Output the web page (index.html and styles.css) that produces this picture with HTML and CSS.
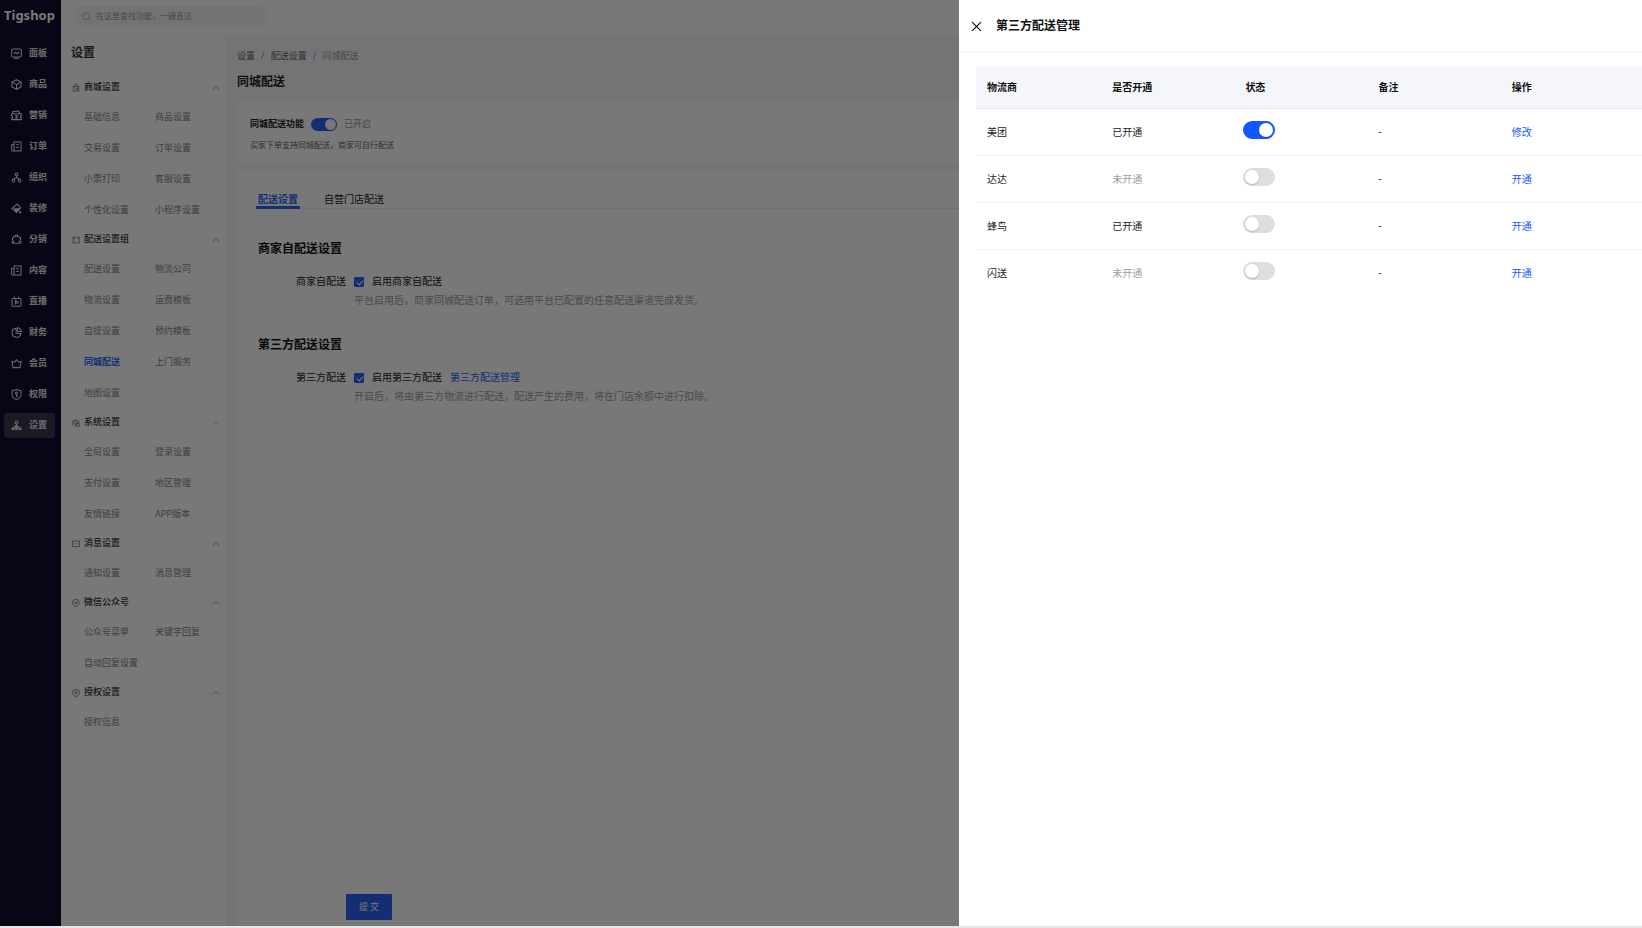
FILE: index.html
```html
<!DOCTYPE html>
<html lang="zh-CN">
<head>
    <meta charset="UTF-8">
    <meta name="viewport" content="width=device-width, initial-scale=1.0">
    <title>同城配送</title>
    <link rel="stylesheet" href="styles.css">
</head>
<body>
    <svg class="sprite" aria-hidden="true">
        <symbol id="i-panel" viewBox="0 0 16 16"><rect x="1" y="1.500" width="14" height="11.500" rx="2"/><path d="M4 8.500l2.500-2.500L9 8.500l3-3M4 15h8"/></symbol>
        <symbol id="i-goods" viewBox="0 0 16 16"><path d="M8 1l6.500 3.500v7L8 15l-6.500-3.500v-7zM1.500 4.500L8 8l6.500-3.500M8 8v7"/></symbol>
        <symbol id="i-sale" viewBox="0 0 16 16"><path d="M1 5.500h14v3a1.500 1.500 0 0 0 0 3V14H1v-2.500a1.500 1.500 0 0 0 0-3zM2.500 5V2.500L11 1.500l2 3.500M5.500 8.500h5M5.500 11.500h5M8 8.500v3"/></symbol>
        <symbol id="i-doc" viewBox="0 0 16 16"><path d="M4.500 1.500h10v13h-12A1.500 1.500 0 0 1 1 13V5h3.500zM4.500 5v8a1.500 1.500 0 0 1-2 1.500M7.500 5.500h4M7.500 9.500h4"/></symbol>
        <symbol id="i-org" viewBox="0 0 16 16"><circle cx="8" cy="3.500" r="2"/><circle cx="3.500" cy="12.500" r="2"/><circle cx="12.500" cy="12.500" r="2"/><path d="M8 5.500v2.500M3.500 10.500L8 8l4.500 2.500"/></symbol>
        <symbol id="i-decor" viewBox="0 0 16 16"><path d="M9 1.500l5 5.500-6 7-6.500-6z"/><path class="fill" d="M4 7.500h9.500l-5.500 6.500zM13 10l2.500 5h-4z"/></symbol>
        <symbol id="i-share" viewBox="0 0 16 16"><path d="M6 2.800A5.800 5.800 0 0 0 2.500 10M10 2.800A5.800 5.800 0 0 1 13.500 10M5 13.300a6 6 0 0 0 6 0"/><circle cx="8" cy="2.500" r="1.500"/><circle cx="3" cy="12" r="1.600"/><circle cx="13" cy="12" r="1.600"/></symbol>
        <symbol id="i-live" viewBox="0 0 16 16"><rect x="1.500" y="3.500" width="13" height="11.500" rx="1.500"/><path d="M5 .8v2.700M11 .8v2.700M6.500 6.500v5l4-2.500z"/></symbol>
        <symbol id="i-money" viewBox="0 0 16 16"><path d="M7.500 2a6.500 6.500 0 1 0 7 7.500l-7-.5zM9.500 1v5.500H15A6 6 0 0 0 9.500 1z"/></symbol>
        <symbol id="i-vip" viewBox="0 0 16 16"><path d="M1.200 5l3.800 1 3-3.500L11 6l3.800-1L13 14H3z"/></symbol>
        <symbol id="i-shield" viewBox="0 0 16 16"><path d="M8 .8l6.500 2v6c0 3-3 5.200-6.500 6.400C4.500 14 1.500 11.800 1.500 8.800v-6z"/><circle cx="8" cy="6" r="1.500"/><path d="M8 7.500v4M8 10h1.500"/></symbol>
        <symbol id="i-set" viewBox="0 0 16 16"><circle cx="8" cy="3.500" r="2.200"/><path d="M8 5.500v4M3 11.500L8 7.500l5 4"/><path class="fill" d="M6 9h4v5.500H6zM1 11h4v3.500H1zM11 11h4v3.500h-4z"/></symbol>
        <symbol id="s-shop" viewBox="0 0 16 16"><path d="M7 14.500H2.500V5h11v3M5 7V3.500a3 3 0 0 1 6 0V5"/><circle cx="11" cy="11.500" r="3.300"/><circle cx="11" cy="11.500" r=".8"/></symbol>
        <symbol id="s-ship" viewBox="0 0 16 16"><path d="M2 6V2h12.500v12H2v-3M2 5h5M1 8h4M2 11h3M14 5h-3"/></symbol>
        <symbol id="s-system" viewBox="0 0 16 16"><path d="M7 14.500L1.500 11.500v-7L7.500 1l6 3.500V8"/><circle cx="7.500" cy="7.500" r="3"/><rect x="9" y="9.500" width="5.500" height="5"/></symbol>
        <symbol id="s-msg" viewBox="0 0 16 16"><path d="M1 2h14v11h-5l-2 1.500L6 13H1zM4.500 7.500h2.500M9 7.500h2.500"/></symbol>
        <symbol id="s-wechat" viewBox="0 0 16 16"><path d="M5 14A6.800 6.800 0 1 1 9 14.300L6 15.500zM5 6.500h6M5.500 9h5"/></symbol>
        <symbol id="i-up" viewBox="0 0 8 6"><path d="M.7 4.800L4 1.300l3.300 3.500"/></symbol>
    </svg>

    <div class="app">
        <nav class="side-nav">
            <div class="logo">Tigshop</div>
            <a class="nav-item" href="#"><svg><use href="#i-panel"/></svg>面板</a>
            <a class="nav-item" href="#"><svg><use href="#i-goods"/></svg>商品</a>
            <a class="nav-item" href="#"><svg><use href="#i-sale"/></svg>营销</a>
            <a class="nav-item" href="#"><svg><use href="#i-doc"/></svg>订单</a>
            <a class="nav-item" href="#"><svg><use href="#i-org"/></svg>组织</a>
            <a class="nav-item" href="#"><svg><use href="#i-decor"/></svg>装修</a>
            <a class="nav-item" href="#"><svg><use href="#i-share"/></svg>分销</a>
            <a class="nav-item" href="#"><svg><use href="#i-doc"/></svg>内容</a>
            <a class="nav-item" href="#"><svg><use href="#i-live"/></svg>直播</a>
            <a class="nav-item" href="#"><svg><use href="#i-money"/></svg>财务</a>
            <a class="nav-item" href="#"><svg><use href="#i-vip"/></svg>会员</a>
            <a class="nav-item" href="#"><svg><use href="#i-shield"/></svg>权限</a>
            <a class="nav-item active" href="#"><svg><use href="#i-set"/></svg>设置</a>
        </nav>

        <div class="workspace">
            <header class="top-bar">
                <label class="search">
                    <svg viewBox="0 0 16 16"><circle cx="7.500" cy="7.500" r="6"/><path d="M12 12l2.500 2.500"/></svg>
                    <input type="text" placeholder="在这里查找功能，一键直达" aria-label="查找功能">
                </label>
            </header>

            <div class="body-row">
                <aside class="sub-nav">
                    <h2 class="sub-title">设置</h2>

                    <h3 class="group-title"><svg><use href="#s-shop"/></svg>商城设置<svg class="arrow"><use href="#i-up"/></svg></h3>
                    <div class="group-links">
                        <a href="#">基础信息</a><a href="#">商品设置</a>
                        <a href="#">交易设置</a><a href="#">订单设置</a>
                        <a href="#">小票打印</a><a href="#">客服设置</a>
                        <a href="#">个性化设置</a><a href="#">小程序设置</a>
                    </div>

                    <h3 class="group-title"><svg><use href="#s-ship"/></svg>配送设置组<svg class="arrow"><use href="#i-up"/></svg></h3>
                    <div class="group-links">
                        <a href="#">配送设置</a><a href="#">物流公司</a>
                        <a href="#">物流设置</a><a href="#">运费模板</a>
                        <a href="#">自提设置</a><a href="#">预约模板</a>
                        <a class="active" href="#">同城配送</a><a href="#">上门服务</a>
                        <a href="#">地图设置</a>
                    </div>

                    <h3 class="group-title"><svg><use href="#s-system"/></svg>系统设置<svg class="arrow"><use href="#i-up"/></svg></h3>
                    <div class="group-links">
                        <a href="#">全局设置</a><a href="#">登录设置</a>
                        <a href="#">支付设置</a><a href="#">地区管理</a>
                        <a href="#">友情链接</a><a href="#">APP版本</a>
                    </div>

                    <h3 class="group-title"><svg><use href="#s-msg"/></svg>消息设置<svg class="arrow"><use href="#i-up"/></svg></h3>
                    <div class="group-links">
                        <a href="#">通知设置</a><a href="#">消息管理</a>
                    </div>

                    <h3 class="group-title"><svg><use href="#s-wechat"/></svg>微信公众号<svg class="arrow"><use href="#i-up"/></svg></h3>
                    <div class="group-links">
                        <a href="#">公众号菜单</a><a href="#">关键字回复</a>
                        <a href="#">自动回复设置</a>
                    </div>

                    <h3 class="group-title"><svg><use href="#i-shield"/></svg>授权设置<svg class="arrow"><use href="#i-up"/></svg></h3>
                    <div class="group-links">
                        <a href="#">授权信息</a>
                    </div>
                </aside>

                <main class="content">
                    <div class="breadcrumb">
                        <a href="#">设置</a><span>/</span><a href="#">配送设置</a><span>/</span><span class="current">同城配送</span>
                    </div>
                    <h1 class="page-title">同城配送</h1>

                    <section class="card feature">
                        <div class="feature-row">
                            <label for="cityDelivery">同城配送功能</label>
                            <input class="switch small" type="checkbox" role="switch" id="cityDelivery" checked>
                            <span class="state">已开启</span>
                        </div>
                        <p>买家下单支持同城配送，商家可自行配送</p>
                    </section>

                    <section class="card settings">
                        <div class="tabs" role="tablist">
                            <button class="tab active" type="button" role="tab" aria-selected="true">配送设置</button>
                            <button class="tab" type="button" role="tab">自营门店配送</button>
                        </div>

                        <h2 class="section-title">商家自配送设置</h2>
                        <div class="form-row">
                            <span class="form-label">商家自配送</span>
                            <div>
                                <div class="form-line">
                                    <label class="check"><input type="checkbox" checked>启用商家自配送</label>
                                </div>
                                <p class="hint">平台启用后，商家同城配送订单，可选用平台已配置的任意配送渠道完成发货。</p>
                            </div>
                        </div>

                        <h2 class="section-title">第三方配送设置</h2>
                        <div class="form-row">
                            <span class="form-label">第三方配送</span>
                            <div>
                                <div class="form-line">
                                    <label class="check"><input type="checkbox" checked>启用第三方配送</label>
                                    <a href="#">第三方配送管理</a>
                                </div>
                                <p class="hint">开启后，将由第三方物流进行配送，配送产生的费用，将在门店余额中进行扣除。</p>
                            </div>
                        </div>
                    </section>

                    <footer class="submit-bar">
                        <button class="submit" type="button">提 交</button>
                    </footer>
                </main>
            </div>
        </div>
    </div>

    <div class="mask"></div>

    <aside class="drawer" role="dialog" aria-labelledby="drawerTitle">
        <header class="drawer-head">
            <button class="close" type="button" aria-label="关闭">
                <svg viewBox="0 0 12 12"><path d="M1.200 1.200l9.600 9.600M10.800 1.200l-9.600 9.600"/></svg>
            </button>
            <h2 id="drawerTitle">第三方配送管理</h2>
        </header>
        <div class="drawer-body">
            <table class="carriers">
                <thead>
                    <tr><th>物流商</th><th>是否开通</th><th>状态</th><th>备注</th><th>操作</th></tr>
                </thead>
                <tbody>
                    <tr>
                        <td>美团</td>
                        <td>已开通</td>
                        <td class="switch-cell"><input class="switch" type="checkbox" role="switch" aria-label="美团" checked></td>
                        <td>-</td>
                        <td><a href="#">修改</a></td>
                    </tr>
                    <tr>
                        <td>达达</td>
                        <td class="off">未开通</td>
                        <td class="switch-cell"><input class="switch" type="checkbox" role="switch" aria-label="达达"></td>
                        <td>-</td>
                        <td><a href="#">开通</a></td>
                    </tr>
                    <tr>
                        <td>蜂鸟</td>
                        <td>已开通</td>
                        <td class="switch-cell"><input class="switch" type="checkbox" role="switch" aria-label="蜂鸟"></td>
                        <td>-</td>
                        <td><a href="#">开通</a></td>
                    </tr>
                    <tr>
                        <td>闪送</td>
                        <td class="off">未开通</td>
                        <td class="switch-cell"><input class="switch" type="checkbox" role="switch" aria-label="闪送"></td>
                        <td>-</td>
                        <td><a href="#">开通</a></td>
                    </tr>
                </tbody>
            </table>
        </div>
    </aside>
</body>
</html>
```
FILE: styles.css
```css
* {
    box-sizing: border-box;
}
body {
    --primary: #1557ff;
    margin: 0;
    padding-bottom: 2px;
    font-family: Roboto, "Noto Sans CJK SC", sans-serif;
    font-size: 9px;
    line-height: 15px;
    color: #222;
    background: #e6e6e6;
}
h1, h2, h3, p {
    margin: 0;
}
a {
    color: var(--primary);
    text-decoration: none;
}
button, input {
    font: inherit;
    margin: 0;
}
button {
    border: none;
    background: none;
    padding: 0;
    cursor: pointer;
}
svg {
    fill: none;
    stroke: currentColor;
    stroke-width: 1.3;
}
.fill {
    fill: currentColor;
    stroke: none;
}
.sprite {
    display: none;
}
.app {
    --primary: #2b62f6;
    display: flex;
    min-height: calc(100vh - 2px);
    background: #fff;
}

/* dark main menu */
.side-nav {
    display: flex;
    flex-direction: column;
    gap: 6px;
    flex: 0 0 61px;
    width: 61px;
    padding: 0 6px 0 4px;
    background: #120e30;
}
.logo {
    height: 35px;
    line-height: 31px;
    font-family: "Noto Sans", sans-serif;
    font-size: 13px;
    font-weight: bold;
    color: #fff;
}
.nav-item {
    display: flex;
    align-items: center;
    gap: 7px;
    height: 25px;
    padding-left: 7px;
    border-radius: 4px;
    color: #e4e4ea;
    font-weight: bold;
}
.nav-item svg {
    width: 11px;
    height: 11px;
    stroke-width: 1.5;
}
.nav-item.active {
    background: #3b3b50;
}

.workspace {
    display: flex;
    flex-direction: column;
    flex: 1;
    min-width: 0;
}
.top-bar {
    height: 36px;
    padding: 6px 13px;
    border-bottom: 1px solid #f2f2f4;
}
.search {
    display: flex;
    align-items: center;
    gap: 5px;
    width: 194px;
    height: 21px;
    padding: 0 8px;
    border-radius: 11px;
    background: #f4f4f6;
    color: #8b95b5;
}
.search svg {
    width: 9px;
    height: 9px;
}
.search input {
    flex: 1;
    min-width: 0;
    padding: 0;
    border: none;
    outline: none;
    background: none;
    font-size: 8px;
}
.search input::placeholder {
    color: #9a9aa2;
}
.body-row {
    display: flex;
    flex: 1;
}

/* settings menu */
.sub-nav {
    flex: 0 0 165px;
    padding: 0 6px 0 7px;
    color: #333;
}
.sub-title {
    height: 33px;
    margin-bottom: 5px;
    padding-left: 3px;
    line-height: 34px;
    font-size: 12px;
    font-weight: bold;
    border-bottom: 1px solid #f3f3f3;
}
.group-title {
    display: flex;
    align-items: center;
    gap: 4px;
    height: 27px;
    padding-left: 4px;
    font-size: 9px;
    font-weight: 500;
}
.group-title svg {
    width: 8px;
    height: 8px;
    color: #555;
}
.group-title .arrow {
    width: 8px;
    height: 6px;
    margin-left: auto;
    stroke-width: 1;
    color: #a8a8a8;
}
.group-links {
    display: grid;
    grid-template-columns: 71px 1fr;
    padding: 1px 0 0 16px;
    line-height: 31px;
}
.group-links a {
    color: #85858c;
    white-space: nowrap;
}
.group-links a.active {
    color: var(--primary);
    font-weight: bold;
}

/* page content */
.content {
    display: flex;
    flex-direction: column;
    flex: 1;
    min-width: 0;
    padding: 13px 0 0 11px;
    background: #f6f6fa;
}
.breadcrumb {
    display: flex;
    gap: 6px;
    color: #777;
}
.breadcrumb a {
    color: #666;
}
.breadcrumb .current {
    color: #999;
}
.page-title {
    margin: 7px 0;
    line-height: 23px;
    font-size: 12px;
    font-weight: bold;
}
.card {
    background: #fff;
}
.feature {
    height: 61px;
    margin-bottom: 8px;
    padding: 16px 13px;
}
.feature-row {
    display: flex;
    align-items: center;
    gap: 7px;
    margin-bottom: 7px;
    font-weight: bold;
}
.feature-row .state {
    color: #999;
    font-weight: normal;
}
.feature p {
    font-size: 8px;
    line-height: 13px;
    color: #666;
}
.settings {
    flex: 1;
    padding: 19px 15px;
    font-size: 10px;
}
.tabs {
    display: flex;
    gap: 22px;
    margin-bottom: 31px;
    padding-left: 4px;
    border-bottom: 1px solid #ececec;
}
.tab {
    height: 20px;
    margin-bottom: -1px;
    padding: 4px 2px 0;
    border-bottom: 3px solid transparent;
    line-height: 13px;
    color: #222;
}
.tab.active {
    color: var(--primary);
    font-weight: bold;
    border-color: var(--primary);
}
.section-title {
    margin: 0 0 16px 6px;
    line-height: 18px;
    font-size: 12px;
    font-weight: bold;
    color: #111;
}
.form-row {
    display: grid;
    grid-template-columns: 94px 1fr;
    gap: 8px;
    margin-bottom: 27px;
    line-height: 16px;
}
.form-label {
    text-align: right;
}
.form-line {
    display: flex;
    gap: 8px;
}
.check {
    display: flex;
    align-items: center;
    gap: 8px;
}
.check input {
    appearance: none;
    width: 10px;
    height: 10px;
    border-radius: 1px;
    background: var(--primary);
}
.check input:checked::after {
    content: "";
    display: block;
    width: 5px;
    height: 3px;
    margin: 3px 0 0 3px;
    border-left: 1px solid #fff;
    border-bottom: 1px solid #fff;
    transform: rotate(-45deg);
}
.hint {
    margin-top: 3px;
    color: #99a0a8;
}
.submit-bar {
    height: 39px;
    padding: 7px 109px;
    background: #fff;
}
.submit {
    width: 46px;
    height: 26px;
    border-radius: 1px;
    background: var(--primary);
    color: #fff;
}

.switch {
    appearance: none;
    display: block;
    width: 32px;
    height: 18px;
    padding: 2px;
    border-radius: 9px;
    background: #dedede;
    cursor: pointer;
}
.switch::after {
    content: "";
    display: block;
    width: 14px;
    height: 14px;
    border-radius: 50%;
    background: #fff;
    box-shadow: 0 1px 2px rgba(0, 0, 0, 0.2);
}
.switch:checked {
    background: var(--primary);
}
.switch:checked::after {
    margin-left: auto;
}
.switch.small {
    width: 26px;
    height: 13px;
    padding: 1px;
}
.switch.small::after {
    width: 11px;
    height: 11px;
}

.mask {
    position: fixed;
    inset: 0 0 2px;
    background: rgba(0, 0, 0, 0.53);
}

/* right drawer */
.drawer {
    position: fixed;
    top: 0;
    right: 0;
    bottom: 2px;
    width: 683px;
    max-width: 100%;
    background: #fff;
    font-size: 10px;
}
.drawer-head {
    display: flex;
    align-items: center;
    gap: 14px;
    height: 53px;
    padding: 2px 12px 0;
    border-bottom: 2px solid #f5f6fa;
}
.drawer-head h2 {
    font-size: 12px;
    font-weight: bold;
    color: #111;
}
.close {
    display: flex;
    color: #111;
}
.close svg {
    width: 11px;
    height: 11px;
}
.drawer-body {
    padding: 14px 0 0 17px;
}
.carriers {
    width: 100%;
    table-layout: fixed;
    border-collapse: separate;
    border-spacing: 0;
    text-align: left;
}
.carriers th {
    height: 42px;
    padding: 0 3px;
    border-bottom: 1px solid #e9ebef;
    background: #f5f6fb;
    font-weight: bold;
    color: #111;
}
.carriers td {
    height: 47px;
    padding: 0 3px;
    border-bottom: 1px solid #f2f2f4;
}
.carriers tr:last-child td {
    border-bottom: none;
}
.carriers th:first-child,
.carriers td:first-child {
    padding-left: 11px;
}
.carriers .switch-cell {
    padding: 0 1px 5px;
}
.carriers .off {
    color: #9aa0a6;
}
```
